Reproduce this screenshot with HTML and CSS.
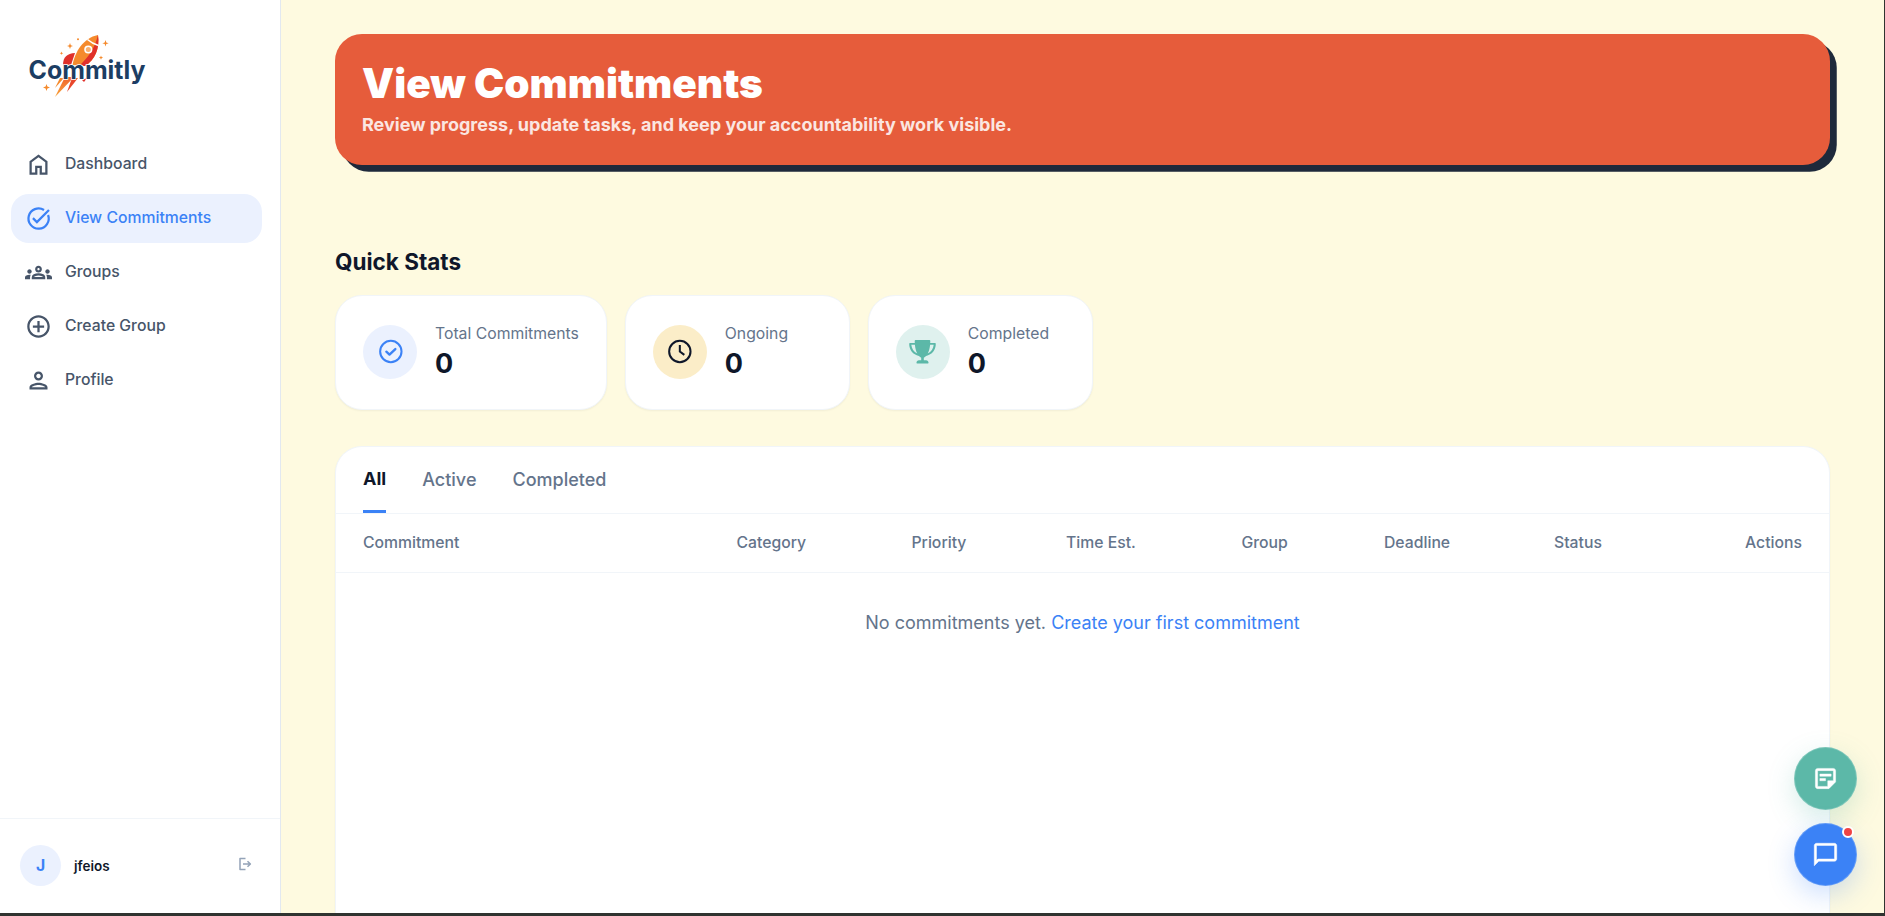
FILE: index.html
```html
<!DOCTYPE html>
<html lang="en">
<head>
  <meta charset="UTF-8" />
  <meta name="viewport" content="width=device-width, initial-scale=1.0"/>
  <title>View Commitments - Commitly</title>
  <link rel="stylesheet" href="styles.css">
</head>
<body>

  <aside class="sidebar">
    <a class="logo" href="#">
      <svg width="130" height="76" viewBox="0 0 130 76">
        <defs>
          <linearGradient id="flame" x1="0" y1="0" x2="0" y2="1">
            <stop offset="0" stop-color="#f0622d"/>
            <stop offset="1" stop-color="#f9a63a"/>
          </linearGradient>
        </defs>
        <path d="M39 37C39 29 43 25.500 51 25L47 37z" fill="#e0312b"/>
        <path d="M48.500 37C51 24 59 10 74 7C76 20 71 32 61 38z" fill="#f58a2c"/>
        <path d="M74 7C76 20 71 32 61 38L55 38C65 29 71 19 74 7z" fill="#e0312b"/>
        <path d="M63.500 11.500Q68 15.500 74.500 17.500" fill="none" stroke="#fff" stroke-width="1.600"/>
        <circle cx="64.300" cy="21.500" r="3.300" fill="#f9b070" stroke="#fff" stroke-width="1.600"/>
        <path d="M41 49L31 69L50 49z" fill="url(#flame)"/>
        <path d="M36 50L31 60L40 50z" fill="#f58a2c"/>
        <path d="M48 50L43 64L54 50z" fill="#e8472c"/>
        <path d="M58 52L60 54L63 50z" fill="#e0312b"/>
        <g fill="#f58a2c">
          <path d="M81.500 12l.8 2.400 2.400.8-2.400.8-.8 2.400-.8-2.400-2.400-.8 2.400-.8z"/>
          <path d="M46 15l.8 2.200 2.200.8-2.200.8-.8 2.200-.8-2.200-2.200-.8 2.200-.8z"/>
          <path d="M77 27.500l.6 1.500 1.500.6-1.500.6-.6 1.500-.6-1.500-1.500-.6 1.500-.6z"/>
          <path d="M37.500 23.500l.5 1.300 1.300.5-1.300.5-.5 1.300-.5-1.300-1.300-.5 1.300-.5z"/>
          <path d="M22.500 56l.9 2.600 2.600.9-2.600.9-.9 2.600-.9-2.600-2.600-.9 2.600-.9z"/>
          <circle cx="54" cy="11.300" r="1"/>
        </g>
        <text class="logo-text" x="4.500" y="50.500" textLength="117" lengthAdjust="spacingAndGlyphs">Commitly</text>
      </svg>
    </a>

    <nav class="nav">
      <a class="nav-item" href="#">
        <svg class="icon" viewBox="0 0 24 24"><path d="M6 19h3v-6h6v6h3v-9l-6-4.500L6 10zm-2 2V9l8-6 8 6v12h-7v-6h-2v6z"/></svg>
        <span>Dashboard</span>
      </a>
      <a class="nav-item active" href="#">
        <svg class="icon" viewBox="0 0 24 24" fill="none" stroke="currentColor" stroke-width="2"><path d="M20.500 8.900A9 9 0 1 1 16.900 4.450M7.050 11.650l3.540 3.540L21.300 4.500"/></svg>
        <span>View Commitments</span>
      </a>
      <a class="nav-item" href="#">
        <svg class="icon" viewBox="0 0 24 24"><path d="M4 13c1.100 0 2-.9 2-2s-.9-2-2-2-2 .9-2 2 .9 2 2 2m1.130 1.100C4.760 14.040 4.390 14 4 14c-.99 0-1.930.21-2.780.58C.48 14.900 0 15.620 0 16.430V18h4.500v-1.610c0-.83.23-1.610.63-2.290M20 13c1.100 0 2-.9 2-2s-.9-2-2-2-2 .9-2 2 .9 2 2 2m4 3.430c0-.81-.48-1.530-1.220-1.850-.85-.37-1.790-.58-2.780-.58-.39 0-.76.040-1.130.1.400.68.630 1.460.63 2.290V18H24zm-7.760-2.780c-1.170-.52-2.610-.9-4.240-.9s-3.070.39-4.240.9A2.990 2.990 0 0 0 6 16.390V18h12v-1.610c0-1.180-.68-2.260-1.760-2.740M8.070 16c.09-.23.13-.39.910-.69.970-.38 1.990-.56 3.020-.56s2.050.18 3.020.56c.77.300.81.460.910.690zM12 8c.55 0 1 .45 1 1s-.45 1-1 1-1-.45-1-1 .45-1 1-1m0-2c-1.660 0-3 1.340-3 3s1.340 3 3 3 3-1.340 3-3-1.340-3-3-3"/></svg>
        <span>Groups</span>
      </a>
      <a class="nav-item" href="#">
        <svg class="icon" viewBox="0 0 24 24"><path d="M13 7h-2v4H7v2h4v4h2v-4h4v-2h-4zm-1-5C6.480 2 2 6.480 2 12s4.480 10 10 10 10-4.480 10-10S17.520 2 12 2m0 18c-4.410 0-8-3.590-8-8s3.590-8 8-8 8 3.590 8 8-3.590 8-8 8"/></svg>
        <span>Create Group</span>
      </a>
      <a class="nav-item" href="#">
        <svg class="icon" viewBox="0 0 24 24"><path d="M12 6c1.100 0 2 .9 2 2s-.9 2-2 2-2-.9-2-2 .9-2 2-2m0 10c2.700 0 5.800 1.290 6 2H6c.23-.72 3.310-2 6-2m0-12C9.790 4 8 5.790 8 8s1.790 4 4 4 4-1.790 4-4-1.790-4-4-4m0 10c-2.670 0-8 1.340-8 4v2h16v-2c0-2.660-5.330-4-8-4"/></svg>
        <span>Profile</span>
      </a>
    </nav>

    <div class="user">
      <div class="avatar">J</div>
      <span class="username">jfeios</span>
      <svg class="logout" viewBox="0 0 14 14" fill="none" stroke="currentColor" stroke-width="1.500" stroke-linejoin="round"><path d="M7.500 1.500H2v11h5.500M5 7h7M9.500 4.200L12.400 7 9.500 9.800"/></svg>
    </div>
  </aside>

  <main class="content">
    <header class="banner">
      <h1>View Commitments</h1>
      <p>Review progress, update tasks, and keep your accountability work visible.</p>
    </header>

    <h2>Quick Stats</h2>
    <section class="stats">
      <div class="stat">
        <div class="stat-icon blue">
          <svg class="icon" viewBox="0 0 24 24" fill="none" stroke="currentColor" stroke-width="1.800" stroke-linecap="round" stroke-linejoin="round"><circle cx="12.300" cy="12" r="9.500"/><path d="M8.300 12.200l2.800 2.500 5.200-4.900" stroke-width="2.100"/></svg>
        </div>
        <div>
          <div class="stat-label">Total Commitments</div>
          <div class="stat-value">0</div>
        </div>
      </div>
      <div class="stat">
        <div class="stat-icon yellow">
          <svg class="icon" viewBox="0 0 24 24" fill="none" stroke="currentColor" stroke-width="1.800"><circle cx="12.300" cy="12" r="9.500"/><path d="M12.300 6.200V12l4 3"/></svg>
        </div>
        <div>
          <div class="stat-label">Ongoing</div>
          <div class="stat-value">0</div>
        </div>
      </div>
      <div class="stat">
        <div class="stat-icon green">
          <svg class="trophy" viewBox="0 0 27 24"><path d="M6.500 0h14c.5 0 .8.400.8.900L21.200 3H26c.5 0 .8.300.8.800 0 6.200-3.700 10.900-9.700 12.200-.8.900-1.700 1.500-2.300 1.700v2.600h2.200c1.500 0 2.500 1 2.500 2.300v.5c0 .3-.2.500-.5.500H8c-.3 0-.5-.2-.5-.5v-.5c0-1.300 1-2.300 2.500-2.300h2.200v-2.600c-.6-.2-1.500-.8-2.300-1.700C3.900 14.700.2 10 .2 3.800c0-.5.300-.8.800-.8h4.800L5.700.9c0-.5.300-.9.800-.9zM2.300 4.800c.4 4 2.400 7.300 6 8.800C7 11.200 6.200 8.300 5.900 4.800zm22.400 0h-3.600c-.3 3.500-1.100 6.400-2.400 8.800 3.600-1.500 5.600-4.800 6-8.800z"/></svg>
        </div>
        <div>
          <div class="stat-label">Completed</div>
          <div class="stat-value">0</div>
        </div>
      </div>
    </section>

    <section class="panel">
      <div class="tabs">
        <a class="tab selected" href="#">All</a>
        <a class="tab" href="#">Active</a>
        <a class="tab" href="#">Completed</a>
      </div>
      <div class="table-head">
        <span>Commitment</span>
        <span>Category</span>
        <span>Priority</span>
        <span>Time Est.</span>
        <span>Group</span>
        <span>Deadline</span>
        <span>Status</span>
        <span class="right">Actions</span>
      </div>
      <p class="empty">No commitments yet. <a href="#">Create your first commitment</a></p>
    </section>
  </main>

  <div class="fabs">
    <button class="fab notes" aria-label="Notes">
      <svg class="icon" viewBox="0 0 24 24"><path d="M19 5v9h-5v5H5V5zm0-2H5c-1.100 0-2 .9-2 2v14c0 1.100.9 2 2 2h10l6-6V5c0-1.100-.9-2-2-2m-7 11H7v-2h5zm5-4H7V8h10z"/></svg>
    </button>
    <button class="fab chat" aria-label="Chat">
      <svg class="icon" viewBox="0 0 24 24"><path d="M20 2H4c-1.100 0-2 .9-2 2v18l4-4h14c1.100 0 2-.9 2-2V4c0-1.100-.9-2-2-2m0 14H5.170L4 17.170V4h16z"/></svg>
      <span class="dot"></span>
    </button>
  </div>

</body>
</html>
```

FILE: styles.css
```css
* {
  box-sizing: border-box;
}

body {
  font-family: Inter, sans-serif;
  background: #fefae0;
  color: #0f172a;
  margin: 0;
  height: 100vh;
  display: flex;
  overflow: hidden;
  border-right: 1px solid #303330;
  border-bottom: 3px solid #303330;
}

a {
  text-decoration: none;
  color: inherit;
}

.icon {
  width: 27px;
  height: 27px;
  fill: currentColor;
  flex: none;
}

.icon[fill="none"] {
  fill: none;
}

/* sidebar */
.sidebar {
  width: 281px;
  flex: none;
  background: white;
  border-right: 1px solid #e2e8f0;
  display: flex;
  flex-direction: column;
}

.logo {
  height: 140px;
  padding: 28px 0 0 24px;
}

.logo-text {
  font-family: Inter, sans-serif;
  font-size: 25px;
  font-weight: 700;
  fill: #1c3d63;
  stroke: white;
  stroke-width: 1.5px;
  paint-order: stroke;
}

.nav {
  flex: 1;
  padding: 0 18px 0 11px;
}

.nav-item {
  display: flex;
  align-items: center;
  gap: 13.5px;
  height: 49px;
  margin-bottom: 5px;
  padding: 0 13.5px;
  border-radius: 18px;
  font-size: 15.75px;
  font-weight: 500;
  color: #475569;
}

.nav-item span {
  padding-bottom: 3px;
}

.nav-item.active {
  background: #ebf1fe;
  color: #3b82f6;
}

.user {
  height: 95px;
  border-top: 1px solid #f1f5f9;
  padding: 0 28px 1px 20px;
  display: flex;
  align-items: center;
}

.avatar {
  width: 41px;
  height: 41px;
  border-radius: 50%;
  background: #ebf1fe;
  color: #3b82f6;
  font-size: 15.75px;
  font-weight: 700;
  display: flex;
  justify-content: center;
  align-items: center;
}

.username {
  flex: 1;
  margin-left: 13px;
  padding-top: 1px;
  font-size: 13.5px;
  font-weight: 600;
}

.logout {
  width: 14px;
  height: 14px;
  margin-bottom: 3px;
  color: #94a3b8;
}

/* main column */
.content {
  flex: 1;
  padding: 34px 54px 0;
  display: flex;
  flex-direction: column;
}

.banner {
  height: 131px;
  padding: 27px;
  border-radius: 27px;
  background: #e65c3b;
  box-shadow: 6.75px 6.75px 0 #1e293b;
  color: white;
}

h1 {
  margin: 0;
  font-size: 40.5px;
  line-height: 45px;
  font-weight: 900;
}

.banner p {
  margin: 5px 0 0;
  font-size: 18px;
  line-height: 27px;
  font-weight: 700;
  opacity: 0.85;
}

h2 {
  margin: 81px 0 17px;
  font-size: 22.5px;
  line-height: 32px;
  font-weight: 700;
}

.stats {
  display: flex;
  gap: 18px;
}

.stat {
  min-width: 225px;
  height: 115px;
  padding: 0 27px;
  background: white;
  border: 1px solid #f1f5f9;
  border-radius: 27px;
  box-shadow: 0 1px 2px rgba(0,0,0,0.05);
  display: flex;
  align-items: center;
  gap: 18px;
}

.stat-icon {
  width: 54px;
  height: 54px;
  margin-bottom: 2px;
  border-radius: 50%;
  display: flex;
  justify-content: center;
  align-items: center;
}

.blue {
  background: #ebf1fe;
  color: #3b82f6;
}

.yellow {
  background: #fbedc8;
}

.green {
  background: #dff1ee;
  color: #5cb8a8;
}

.trophy {
  width: 27px;
  height: 24px;
  fill: currentColor;
}

.stat-label {
  font-size: 15.75px;
  line-height: 22.5px;
  color: #64748b;
}

.stat-value {
  font-size: 27px;
  line-height: 36px;
  font-weight: 700;
}

.panel {
  flex: 1;
  margin-top: 36px;
  background: white;
  border: 1px solid #f1f5f9;
  border-bottom: 0;
  border-radius: 27px 27px 0 0;
  box-shadow: 0 1px 2px rgba(0,0,0,0.05);
}

.tabs {
  height: 67px;
  padding: 0 27px;
  border-bottom: 1px solid #f1f5f9;
  display: flex;
  gap: 36px;
}

.tab {
  height: 66px;
  padding-top: 19px;
  font-size: 18px;
  line-height: 27px;
  font-weight: 500;
  color: #64748b;
}

.tab.selected {
  padding-top: 18px;
  font-weight: 700;
  color: #0f172a;
  border-bottom: 3px solid #3b82f6;
}

.table-head {
  height: 59px;
  padding: 0 27px 2px;
  border-bottom: 1px solid #f1f5f9;
  display: grid;
  grid-template-columns: 373.5px 175px 154.5px 175.5px 142.5px 170px 1fr auto;
  align-items: center;
  font-size: 15.75px;
  font-weight: 500;
  color: #64748b;
}

.right {
  text-align: right;
}

.empty {
  margin: 36px 0 0;
  text-align: center;
  font-size: 18px;
  line-height: 27px;
  color: #64748b;
}

.empty a {
  color: #3b82f6;
}

/* floating buttons */
.fabs {
  position: fixed;
  right: 28px;
  bottom: 30px;
  display: flex;
  flex-direction: column;
  gap: 13px;
}

.fab {
  position: relative;
  width: 63px;
  height: 63px;
  border: 1px solid rgba(255,255,255,0.2);
  border-radius: 50%;
  padding: 0;
  color: white;
  display: flex;
  justify-content: center;
  align-items: center;
}

.fab .icon {
  stroke: white;
  stroke-width: 0.4;
}

.notes {
  background: #5cb8a8;
  box-shadow: 0 9px 27px rgba(92,184,168,0.25);
}

.chat {
  background: #3b82f6;
  box-shadow: 0 9px 27px rgba(59,130,246,0.25);
}

.dot {
  position: absolute;
  top: 2px;
  right: 2px;
  width: 12px;
  height: 12px;
  background: #ef4444;
  border: 2px solid white;
  border-radius: 50%;
}
```
